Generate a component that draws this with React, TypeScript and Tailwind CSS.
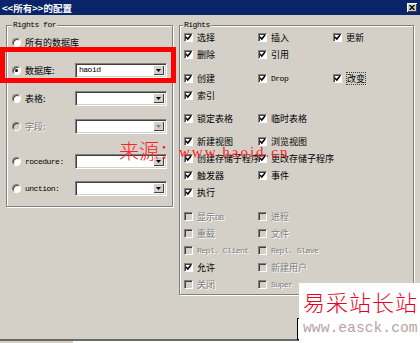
import React from "react";

const CJK = "font-['Noto_Sans_CJK_SC',sans-serif]";
const MONO = "font-['Liberation_Mono',monospace]";
const LAT = "font-['Liberation_Mono',monospace] text-[8px] tracking-[-0.5px]";

function Check({ checked = false, disabled = false }: { checked?: boolean; disabled?: boolean }) {
  return (
    <span
      className={`relative flex items-center justify-center w-[9px] h-[9px] shrink-0 border border-t-[#808080] border-l-[#808080] border-b-white border-r-white shadow-[inset_1px_1px_0_#404040] ${
        disabled ? "bg-[#d4d0c8]" : "bg-white"
      }`}
    >
      {checked && (
        <svg width="7" height="7" viewBox="0 0 7 7" className="absolute left-[0px] top-[0px]">
          <path d="M1 3 L2.8 5 L6 1" stroke="#000" strokeWidth="1.5" fill="none" />
        </svg>
      )}
    </span>
  );
}

function Radio({ checked = false, disabled = false }: { checked?: boolean; disabled?: boolean }) {
  return (
    <span
      className={`flex items-center justify-center w-[9px] h-[9px] shrink-0 rounded-full border border-t-[#808080] border-l-[#808080] border-b-white border-r-white shadow-[inset_1px_1px_0_#404040] ${
        disabled ? "bg-[#d4d0c8]" : "bg-white"
      }`}
    >
      {checked && <span className="w-[3px] h-[3px] rounded-full bg-black" />}
    </span>
  );
}

function Combo({ value, disabled = false }: { value?: string; disabled?: boolean }) {
  return (
    <div className="flex items-center w-[92px] h-[15px] bg-white border border-t-[#808080] border-l-[#808080] border-b-white border-r-white shadow-[inset_1px_1px_0_#404040,inset_-1px_-1px_0_#d4d0c8] pl-[3px] pr-[2px]">
      <span className={`flex-1 ${LAT} leading-[10px] text-black`}>{value}</span>
      <span className="flex items-center justify-center w-[11px] h-[10px] bg-[#d4d0c8] shadow-[inset_1px_1px_0_#fff,inset_-1px_-1px_0_#404040]">
        <svg width="5" height="3" viewBox="0 0 5 3">
          <path d="M0 0 H5 L2.5 3 Z" fill={disabled ? "#808080" : "#000"} />
        </svg>
      </span>
    </div>
  );
}

function Label({ children, disabled = false, mono = false }: { children: React.ReactNode; disabled?: boolean; mono?: boolean }) {
  return (
    <span
      className={`${mono ? LAT : `${CJK} text-[9px]`} leading-[11px] whitespace-nowrap ${
        disabled ? "text-[#808080] [text-shadow:1px_1px_0_#fff]" : "text-black"
      }`}
    >
      {children}
    </span>
  );
}

function CItem({
  label,
  checked = true,
  disabled = false,
  mono = false,
  focus = false,
}: {
  label?: React.ReactNode;
  checked?: boolean;
  disabled?: boolean;
  mono?: boolean;
  focus?: boolean;
}) {
  if (!label) return <div />;
  return (
    <div className="flex items-center gap-[4px]">
      <Check checked={checked} disabled={disabled} />
      {focus ? (
        <span className="border border-dotted border-[#404040] leading-[0px]">
          <Label disabled={disabled} mono={mono}>{label}</Label>
        </span>
      ) : (
        <Label disabled={disabled} mono={mono}>{label}</Label>
      )}
    </div>
  );
}

function Row({ children, className = "" }: { children: React.ReactNode; className?: string }) {
  return <div className={`grid grid-cols-[74px_75px_1fr] h-[17px] items-center ${className}`}>{children}</div>;
}

function RadioRow({
  label,
  checked = false,
  disabled = false,
  mono = false,
  combo,
  value,
  className = "",
}: {
  label: string;
  checked?: boolean;
  disabled?: boolean;
  mono?: boolean;
  combo?: boolean;
  value?: string;
  className?: string;
}) {
  return (
    <div className={`flex items-center h-[16px] ${className}`}>
      <Radio checked={checked} disabled={disabled} />
      <div className="w-[50px] ml-[4px] flex items-center">
        <Label disabled={disabled} mono={mono}>{label}</Label>
      </div>
      {combo && <Combo value={value} disabled={disabled} />}
    </div>
  );
}

export default function App() {
  return (
    <div className="relative w-[420px] h-[343px] overflow-hidden bg-white">
      <div className="flex flex-col h-[341px] bg-[#d4d0c8] border-b-2 border-b-[#6a6a6a]">
        {/* title bar */}
        <div className="flex items-center h-[15px] bg-[#0a246a] pl-[2px] pr-[3px] shrink-0">
          <span className={`flex-1 ${CJK} text-[9.5px] leading-[12px] font-bold text-white`}>{"<<所有>>的配置"}</span>
          <span className="flex items-center justify-center w-[10px] h-[9px] bg-[#d4d0c8] shadow-[inset_1px_1px_0_#fff,inset_-1px_-1px_0_#404040]">
            <svg width="6" height="5" viewBox="0 0 6 5">
              <path d="M0.5 0 L5.5 5 M5.5 0 L0.5 5" stroke="#000" strokeWidth="1.3" />
            </svg>
          </span>
        </div>

        <div className="flex gap-[6px] pl-[6px] pt-[10px]">
          {/* left group */}
          <div className="relative w-[167px] h-[182px] shrink-0 border border-[#808080] shadow-[inset_1px_1px_0_#fff,1px_1px_0_#fff]">
            <span className={`absolute -top-[6px] left-[5px] px-[1px] bg-[#d4d0c8] ${LAT} leading-[10px] text-black`}>
              Rights for
            </span>
            <div className="flex flex-col pl-[5px] pt-[8px]">
              <RadioRow label="所有的数据库" />
              <RadioRow label="数据库:" checked combo value="haoid" className="mt-[12px]" />
              <RadioRow label="表格:" combo className="mt-[12px]" />
              <RadioRow label="字段:" disabled combo className="mt-[12px]" />
              <RadioRow label="rocedure:" mono combo className="mt-[19px]" />
              <RadioRow label="unction:" mono combo className="mt-[11px]" />
            </div>
          </div>

          {/* right group */}
          <div className="relative w-[235px] h-[270px] shrink-0 border border-[#808080] shadow-[inset_1px_1px_0_#fff,1px_1px_0_#fff]">
            <span className={`absolute -top-[6px] left-[3px] px-[1px] bg-[#d4d0c8] ${LAT} leading-[10px] text-black`}>
              Rights
            </span>
            <div className="flex flex-col pl-[4px] pt-[3px]">
              <Row>
                <CItem label="选择" />
                <CItem label="插入" />
                <CItem label="更新" />
              </Row>
              <Row>
                <CItem label="删除" />
                <CItem label="引用" />
                <div />
              </Row>
              <Row className="mt-[7px]">
                <CItem label="创建" />
                <CItem label="Drop" mono />
                <CItem label="改变" focus />
              </Row>
              <Row>
                <CItem label="索引" />
                <div />
                <div />
              </Row>
              <Row className="mt-[6px]">
                <CItem label="锁定表格" />
                <CItem label="临时表格" />
                <div />
              </Row>
              <Row className="mt-[6px]">
                <CItem label="新建视图" />
                <CItem label="浏览视图" />
                <div />
              </Row>
              <Row>
                <CItem label="创建存储子程序" />
                <CItem label="更改存储子程序" />
                <div />
              </Row>
              <Row>
                <CItem label="触发器" />
                <CItem label="事件" />
                <div />
              </Row>
              <Row>
                <CItem label="执行" />
                <div />
                <div />
              </Row>
              <Row className="mt-[7px]">
                <CItem label={<>显示<span className={LAT}>DB</span></>} checked={false} disabled />
                <CItem label="进程" checked={false} disabled />
                <div />
              </Row>
              <Row>
                <CItem label="重载" checked={false} disabled />
                <CItem label="文件" checked={false} disabled />
                <div />
              </Row>
              <Row>
                <CItem label="Repl. Client" mono checked={false} disabled />
                <CItem label="Repl. Slave" mono checked={false} disabled />
                <div />
              </Row>
              <Row>
                <CItem label="允许" />
                <CItem label="新建用户" checked={false} disabled />
                <div />
              </Row>
              <Row>
                <CItem label="关闭" checked={false} disabled />
                <CItem label="Super" mono checked={false} disabled />
                <div />
              </Row>
            </div>
          </div>
        </div>

        <div className="pl-[297px] mt-[19px]">
          <button className={`w-[75px] h-[22px] bg-[#d4d0c8] border border-black shadow-[inset_1px_1px_0_#fff,inset_-1px_-1px_0_#808080] ${CJK} text-[9px] text-black`}>
            确定
          </button>
        </div>
      </div>
      <div className="flex h-[2px]">
        <div className="w-[73px] bg-[#d4d0c8]" />
        <div className="flex-1 bg-white" />
      </div>

      {/* overlays: red highlight box and watermarks */}
      <div className="absolute left-0 top-[47px] w-[176px] h-[36px] border-[5px] border-[#ff0000]" />
      <div className={`absolute left-[119px] top-[138px] ${CJK} font-light text-[20px] leading-[26px] text-[#ff2020]`}>来源：</div>
      <div className="absolute left-[179px] top-[144px] font-['Liberation_Serif',serif] text-[15px] leading-[16px] tracking-[2px] text-[#ff2020]">
        www.haoid.cn
      </div>
      <div className="absolute left-[299px] top-[283px] w-[121px] h-[60px] bg-white flex flex-col pl-[4px] pt-[6px]">
        <div className={`${CJK} font-light text-[22px] leading-[25px] tracking-[1px] text-[#e8001c]`}>易采站长站</div>
        <div className={`${MONO} text-[14.7px] leading-[18px] text-[#b8a4a6] mt-[5px]`}>www.easck.com</div>
      </div>
    </div>
  );
}
